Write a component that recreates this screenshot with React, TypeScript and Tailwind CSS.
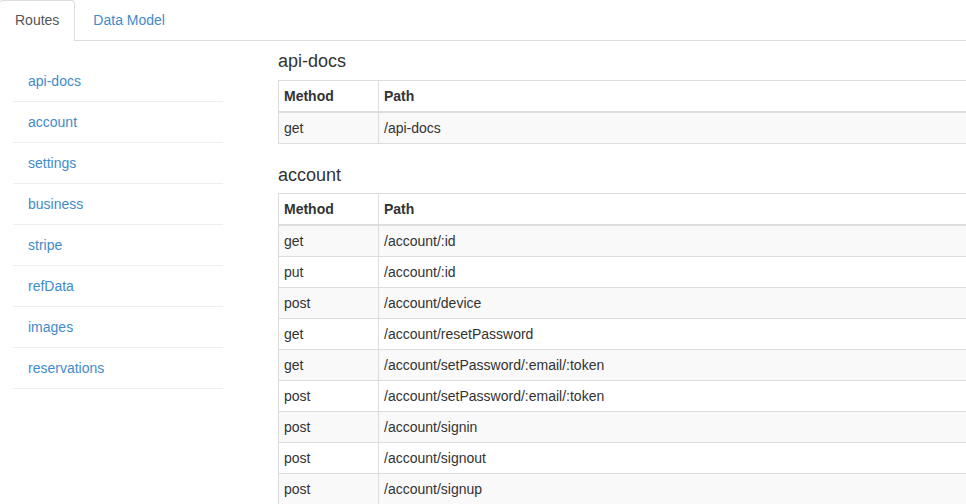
const sections = [
  {
    name: "api-docs",
    routes: [["get", "/api-docs"]],
  },
  {
    name: "account",
    routes: [
      ["get", "/account/:id"],
      ["put", "/account/:id"],
      ["post", "/account/device"],
      ["get", "/account/resetPassword"],
      ["get", "/account/setPassword/:email/:token"],
      ["post", "/account/setPassword/:email/:token"],
      ["post", "/account/signin"],
      ["post", "/account/signout"],
      ["post", "/account/signup"],
    ],
  },
];

const navItems = [
  "api-docs",
  "account",
  "settings",
  "business",
  "stripe",
  "refData",
  "images",
  "reservations",
];

export default function App() {
  return (
    <div className="h-[504px] w-[966px] overflow-hidden bg-white text-[14px] leading-[20px] text-[#333] font-['Liberation_Sans',Arial,sans-serif]">
      <div className="flex h-[41px] border-b border-[#ddd]">
        <div className="-ml-px h-[41px] rounded-t-[4px] border border-b-0 border-[#ddd] bg-white px-[15px] pt-[9px] text-[#555]">
          Routes
        </div>
        <div className="ml-[2px] px-[16px] pt-[10px] text-[#428bca]">Data Model</div>
      </div>

      <div className="flex">
        <div className="w-[278px] shrink-0 pl-[13px] pt-[20px]">
          <ul className="w-[210px]">
            {navItems.map((item) => (
              <li
                key={item}
                className="border-b border-[#eee] px-[15px] py-[10px] text-[#428bca]"
              >
                {item}
              </li>
            ))}
          </ul>
        </div>

        <div className="min-w-0 flex-1 overflow-hidden">
          {sections.map((section, s) => (
            <div key={section.name}>
              <h4
                className={
                  s === 0
                    ? "mt-[10px] mb-[10px] h-[19px] text-[18px] leading-[21px] font-medium"
                    : "mt-[20px] mb-[10px] h-[19px] text-[18px] leading-[23px] font-medium"
                }
              >
                {section.name}
              </h4>
              <table className="w-[760px] border-separate border-spacing-0 border-l border-t border-[#ddd]">
                <thead>
                  <tr>
                    <th className="w-[100px] border-r border-b-2 border-[#ddd] p-[5px] text-left font-bold">
                      Method
                    </th>
                    <th className="border-r border-b-2 border-[#ddd] p-[5px] text-left font-bold">
                      Path
                    </th>
                  </tr>
                </thead>
                <tbody>
                  {section.routes.map(([method, path], i) => (
                    <tr
                      key={method + path}
                      className={i % 2 === 0 ? "bg-[#f9f9f9]" : "bg-white"}
                    >
                      <td className="border-r border-b border-[#ddd] p-[5px]">{method}</td>
                      <td className="border-r border-b border-[#ddd] p-[5px]">{path}</td>
                    </tr>
                  ))}
                </tbody>
              </table>
            </div>
          ))}
        </div>
      </div>
    </div>
  );
}
